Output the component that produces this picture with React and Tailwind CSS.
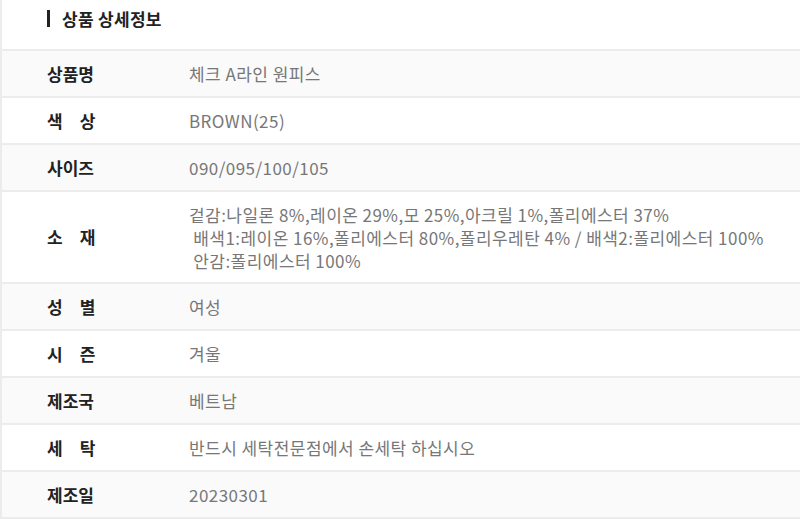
import React from "react";

const rows = [
  { label: "상품명", value: ["체크 A라인 원피스"] },
  { label: "색　상", value: ["BROWN(25)"] },
  { label: "사이즈", value: ["090/095/100/105"] },
  {
    label: "소　재",
    value: [
      "겉감:나일론 8%,레이온 29%,모 25%,아크릴 1%,폴리에스터 37%",
      " 배색1:레이온 16%,폴리에스터 80%,폴리우레탄 4% / 배색2:폴리에스터 100%",
      " 안감:폴리에스터 100%",
    ],
  },
  { label: "성　별", value: ["여성"] },
  { label: "시　즌", value: ["겨울"] },
  { label: "제조국", value: ["베트남"] },
  { label: "세　탁", value: ["반드시 세탁전문점에서 손세탁 하십시오"] },
  { label: "제조일", value: ["20230301"] },
];

const App = () => {
  return (
    <div
      className="w-[800px] h-[519px] overflow-hidden bg-white border-l-2 border-[#ececec]"
      style={{ fontFamily: '"Noto Sans CJK KR", "Noto Sans", sans-serif' }}
    >
      {/* title */}
      <div className="h-[51px] flex items-center pl-[45px] pb-[12px] border-b-2 border-[#ececec]">
        <span className="w-[3px] h-[17px] bg-[#222] mr-[12px]" />
        <h2 className="text-[17px] font-bold text-[#222] tracking-[0.3px]">상품 상세정보</h2>
      </div>

      {/* rows */}
      {rows.map((row, i) => (
        <div
          key={i}
          className={
            "flex items-center border-b-2 border-[#ececec] " +
            (i % 2 === 0 ? "bg-[#fafafa] " : "bg-white ") +
            (row.value.length > 1 ? "h-[92px]" : "h-[47px]")
          }
        >
          <div className="w-[187px] pl-[45px] text-[17px] font-bold text-[#222] whitespace-pre">
            {row.label}
          </div>
          <div className="flex-1 text-[17px] text-[#777] leading-[23px] whitespace-pre tracking-[0.45px]">
            {row.value.map((v, j) => (
              <div key={j}>{v}</div>
            ))}
          </div>
        </div>
      ))}
    </div>
  );
};

export default App;
